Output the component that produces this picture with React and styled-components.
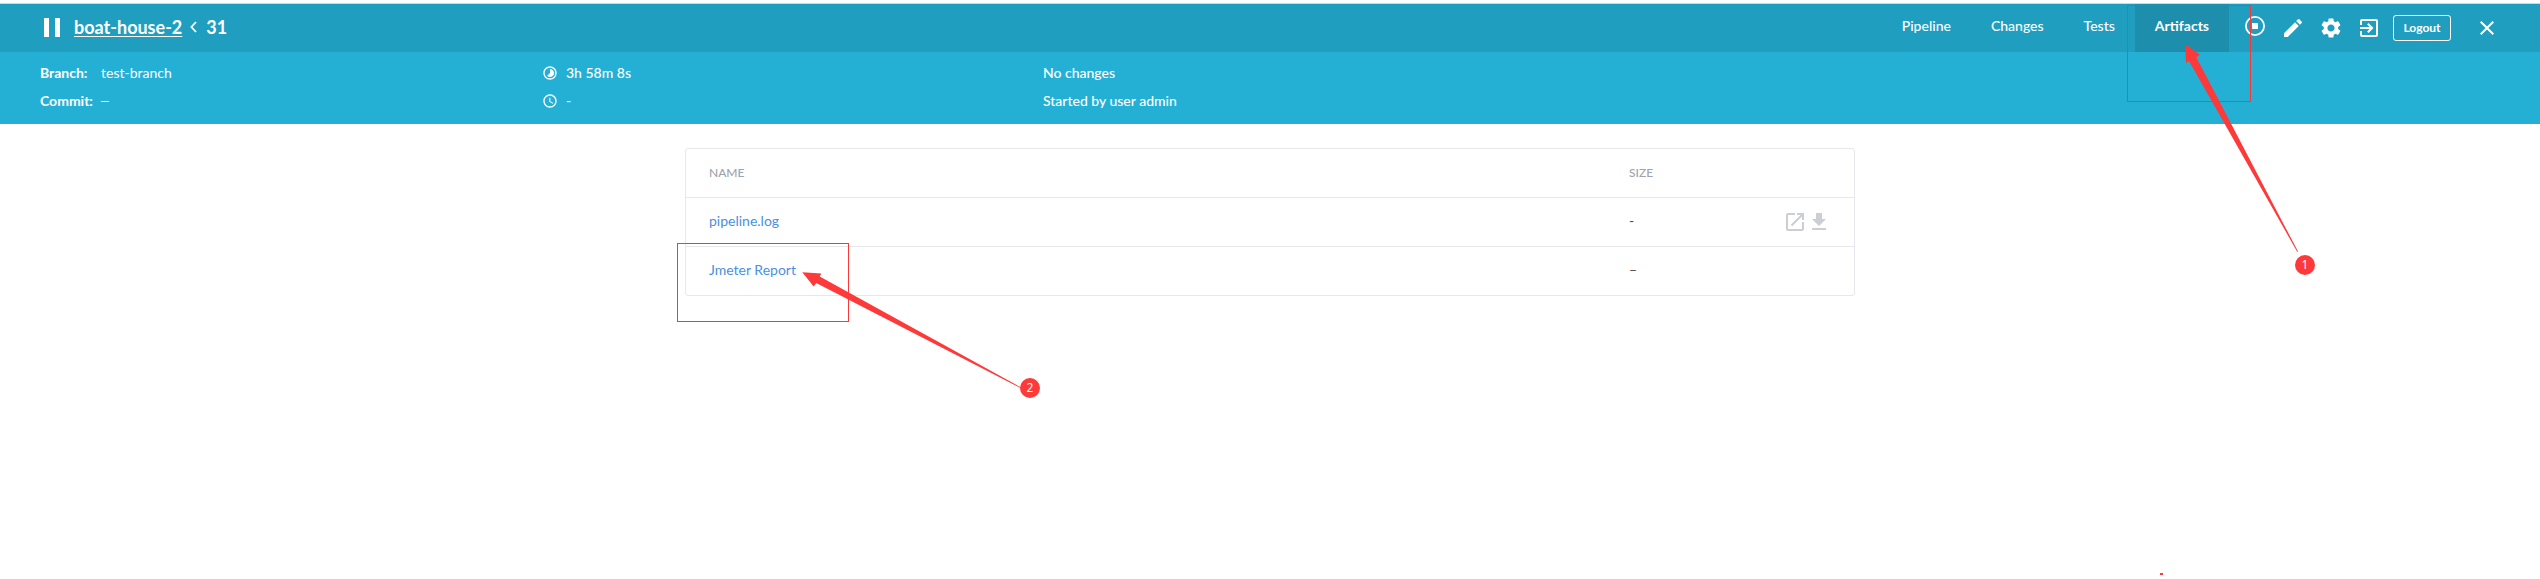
import React from 'react';
import styled, { createGlobalStyle } from 'styled-components';
import {
  MdAccessTime, MdTimelapse, MdEdit, MdSettings, MdExitToApp, MdClose, MdOpenInNew, MdFileDownload,
} from 'react-icons/md';

const GlobalStyle = createGlobalStyle`
  * { box-sizing: border-box; }
  body {
    margin: 0;
    background: #fff;
    font-family: Lato, "Liberation Sans", sans-serif;
    font-size: 14px;
    overflow: hidden;
  }
  svg { display: block; flex: none; }
`;

const Page = styled.div`
  position: relative;
  height: 579px;
  padding-top: 3px;
  overflow: hidden;
`;

const TopBar = styled.header`
  display: flex;
  height: 49px;
  padding: 0 41px 0 44px;
  border-top: 1px solid #ccd8dd;
  background: #209ec0;
  color: #fff;
`;

const Title = styled.div`
  display: flex;
  align-items: center;
  height: 46px;
  flex: 1;
  font-size: 18px;
  font-weight: 700;
  line-height: 22px;
`;

const PauseBars = styled.div`
  width: 16px;
  height: 19px;
  margin: 1px 14px 0 0;
  border: solid #fff;
  border-width: 0 5px;
`;

const PipelineLink = styled.a`
  text-decoration: underline;
  text-decoration-thickness: 1px;
  text-underline-offset: 2px;
`;

const Chevron = styled.svg`
  margin: 0 9px 0 8px;
`;

const Tabs = styled.nav`
  display: flex;
  margin-right: 14px;
`;

const Tab = styled.a`
  padding: 0 20px;
  line-height: 44px;
  font-weight: ${(p) => (p.$active ? 700 : 500)};
  background: ${(p) => (p.$active ? '#1d8eac' : 'transparent')};
`;

const Actions = styled.div`
  display: flex;
  align-items: center;
  gap: 14px;
`;

const StopIcon = styled.svg`
  margin-top: -4px;
`;

const LogoutButton = styled.button`
  width: 58px;
  height: 26px;
  margin: 0 10px 0 -2px;
  padding: 0;
  border: 1px solid #fff;
  border-radius: 3px;
  background: transparent;
  color: #fff;
  font: 700 12px/22px Lato, sans-serif;
`;

const Summary = styled.section`
  display: grid;
  grid-template-columns: 501px 502px 1fr;
  height: 72px;
  padding: 6px 40px 8px;
  background: #24b0d5;
  color: #fff;
`;

const SummaryRow = styled.div`
  display: flex;
  align-items: center;
  height: 28px;
  font-weight: 500;
`;

const Label = styled.span`
  width: 61px;
  font-weight: 700;
`;

const Value = styled.span`
  font-weight: 400;
`;

const Dash = styled.span`
  font-family: "Liberation Sans", sans-serif;
  font-weight: 400;
`;

const TimeIcon = styled.span`
  margin: 2px 8px 0 1px;
`;

const Table = styled.main`
  width: 1170px;
  margin: 24px auto 0;
  border: 1px solid #e6e8ee;
  border-radius: 3px;
`;

const Row = styled.div`
  display: grid;
  grid-template-columns: 920px 1fr auto;
  align-items: center;
  height: ${(p) => (p.$last ? 48 : 49)}px;
  padding: 0 23px;
  border-bottom: ${(p) => (p.$last ? 0 : 1)}px solid #e6e8ee;
  color: #4a4a4a;
`;

const HeadCell = styled.span`
  margin-top: -2px;
  font-size: 12px;
  color: #9ea3ad;
  font-weight: 500;
`;

const FileLink = styled.a`
  color: #4a90e2;
  margin-top: -3px;
`;

const Size = styled.span`
  margin-top: -3px;
`;

const FileActions = styled.div`
  display: flex;
  color: #cbced4;
`;

const Highlight = styled.div`
  position: absolute;
  left: ${(p) => p.$x}px;
  top: ${(p) => p.$y}px;
  width: ${(p) => p.$w}px;
  height: ${(p) => p.$h}px;
  border: 1px solid #fb3838;
`;

const Arrows = styled.svg`
  position: absolute;
  left: 0;
  top: 0;
  fill: #fd3939;
`;

const Marker = styled.span`
  position: absolute;
  left: ${(p) => p.$x}px;
  top: ${(p) => p.$y}px;
  width: 20px;
  height: 20px;
  border-radius: 50%;
  background: #fd3939;
  color: #fff;
  font: 12px/20px "Noto Sans", sans-serif;
  text-align: center;
`;

export default function App() {
  return (
    <Page>
      <GlobalStyle />
      <TopBar>
        <Title>
          <PauseBars />
          <PipelineLink>boat-house-2</PipelineLink>
          <Chevron width="7" height="12" viewBox="0 0 7 12" fill="none" stroke="#fff" strokeWidth="1.8">
            <path d="M6 1 1.4 6 6 11" />
          </Chevron>
          <span>31</span>
        </Title>
        <Tabs>
          <Tab>Pipeline</Tab>
          <Tab>Changes</Tab>
          <Tab>Tests</Tab>
          <Tab $active>Artifacts</Tab>
        </Tabs>
        <Actions>
          <StopIcon width="24" height="24" viewBox="0 0 24 24">
            <circle cx="12" cy="12" r="9.1" fill="none" stroke="#fff" strokeWidth="1.8" />
            <rect x="9" y="9" width="6" height="6" fill="#fff" />
          </StopIcon>
          <MdEdit size={24} />
          <MdSettings size={24} />
          <MdExitToApp size={24} />
          <LogoutButton>Logout</LogoutButton>
          <MdClose size={24} />
        </Actions>
      </TopBar>
      <Summary>
        <div>
          <SummaryRow><Label>Branch:</Label><Value>test-branch</Value></SummaryRow>
          <SummaryRow><Label>Commit:</Label><Dash>–</Dash></SummaryRow>
        </div>
        <div>
          <SummaryRow><TimeIcon><MdTimelapse size={16} /></TimeIcon>3h 58m 8s</SummaryRow>
          <SummaryRow><TimeIcon><MdAccessTime size={16} /></TimeIcon>-</SummaryRow>
        </div>
        <div>
          <SummaryRow>No changes</SummaryRow>
          <SummaryRow>Started by user admin</SummaryRow>
        </div>
      </Summary>
      <Table>
        <Row>
          <HeadCell>NAME</HeadCell>
          <HeadCell>SIZE</HeadCell>
        </Row>
        <Row>
          <FileLink>pipeline.log</FileLink>
          <Size>-</Size>
          <FileActions>
            <MdOpenInNew size={24} />
            <MdFileDownload size={24} />
          </FileActions>
        </Row>
        <Row $last>
          <FileLink>Jmeter Report</FileLink>
          <Size>–</Size>
        </Row>
      </Table>

      <Highlight $x={2127} $y={5} $w={124} $h={97} />
      <Highlight $x={677} $y={243} $w={172} $h={79} />
      <Arrows width="2540" height="579" viewBox="0 0 2540 579">
        <path d="M2185 44 2200 54.7 2196.3 57.3 2298 251.5 2297.3 252 2189 61 2186 63Z" />
        <path d="M802.3 272.2 821.3 273.6 819.7 276.4 1020.5 387.2 1020 387.8 816.2 283 813.7 286.5Z" />
        <rect x="2160" y="573" width="3" height="2" />
      </Arrows>
      <Marker $x={2295} $y={255}>1</Marker>
      <Marker $x={1020} $y={378}>2</Marker>
    </Page>
  );
}
